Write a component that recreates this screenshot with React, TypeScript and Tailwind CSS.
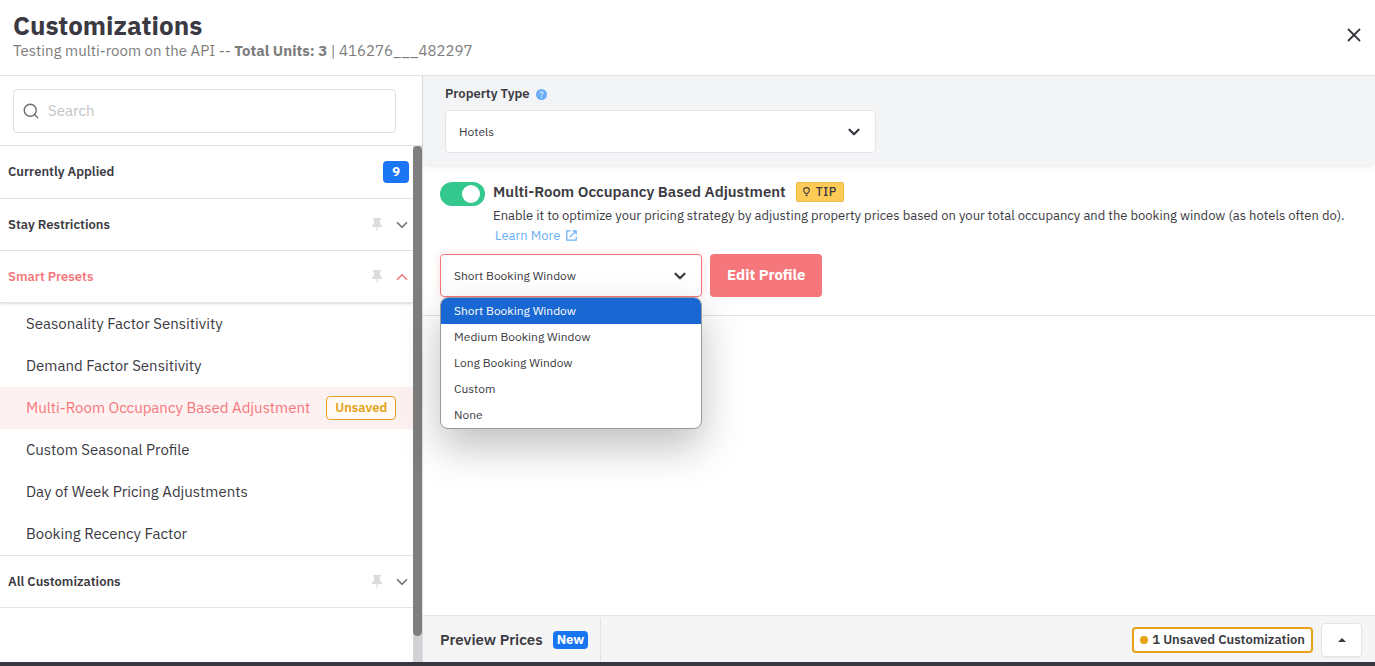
import React, { useState } from 'react';
import { Search, X, ChevronDown, ChevronUp } from 'lucide-react';

interface Section {
  id: string;
  title: string;
  items: string[];
}

const presets = [
  'Seasonality Factor Sensitivity',
  'Demand Factor Sensitivity',
  'Multi-Room Occupancy Based Adjustment',
  'Custom Seasonal Profile',
  'Day of Week Pricing Adjustments',
  'Booking Recency Factor',
];

const sections: Section[] = [
  { id: 'stay', title: 'Stay Restrictions', items: [] },
  { id: 'presets', title: 'Smart Presets', items: presets },
  { id: 'all', title: 'All Customizations', items: [] },
];

const bookingWindows = ['Short Booking Window', 'Medium Booking Window', 'Long Booking Window', 'Custom', 'None'];

const PinIcon = () => (
  <svg width="10" height="13" viewBox="0 0 10 13" fill="#dcdcdc" aria-hidden="true">
    <path d="M1 0h8v1.6H8v4l2 1.8V9H0V7.4l2-1.8v-4H1z" />
    <path d="M4.4 9h1.2v3.2L5 13l-.6-.8z" />
  </svg>
);

const HelpIcon = () => (
  <svg width="11" height="11" viewBox="0 0 12 12" aria-hidden="true">
    <circle cx="6" cy="6" r="6" fill="#6aabf7" />
    <path d="M4.3 4.7a1.7 1.7 0 1 1 2.5 1.5c-.6.3-.8.5-.8 1.1" fill="none" stroke="#fff" strokeWidth="1" />
    <circle cx="6" cy="9" r=".7" fill="#fff" />
  </svg>
);

const BulbIcon = () => (
  <svg width="7" height="10" viewBox="0 0 8 11" fill="none" stroke="#3b3a42" strokeWidth="1.2" aria-hidden="true">
    <path d="M2.8 7.4C2.6 6.2.8 5.4.8 3.7a3.2 3.2 0 0 1 6.4 0C7.2 5.4 5.4 6.2 5.2 7.4z" />
    <path d="M2.8 9.6h2.4" />
  </svg>
);

const ExternalIcon = () => (
  <svg width="11" height="11" viewBox="0 0 11 11" fill="none" stroke="currentColor" strokeWidth="1.2" aria-hidden="true">
    <path d="M4.5.8H.8v9.4h9.4V6.5" />
    <path d="M6.5.8h3.7v3.7M10 1 3.8 7.2" />
  </svg>
);

const SectionHeader = ({ title, open, onClick }: { title: string; open: boolean; onClick: () => void }) => (
  <button
    onClick={onClick}
    aria-expanded={open}
    className={`flex h-[52px] w-full items-center border-b border-[#e4e4e4] pr-0.5 pl-2 text-left text-[13px] font-semibold ${open ? 'text-[#f5777b] shadow-sm' : 'text-[#3b3a42]'}`}
  >
    <span className="flex-1">{title}</span>
    <PinIcon />
    <span className={`ml-[11px] ${open ? 'text-[#f5777b]' : 'text-[#6f6f6f]'}`}>
      {open ? <ChevronUp size={18} strokeWidth={2.2} /> : <ChevronDown size={18} strokeWidth={2.2} />}
    </span>
  </button>
);

const Sidebar = () => {
  const [openId, setOpenId] = useState('presets');
  const [active, setActive] = useState(presets[2]);

  return (
    <aside className="flex min-w-0 flex-col border-r border-[#dcdde0]">
      <div className="border-b border-[#e4e4e4] pt-[13px] pr-[26px] pb-3 pl-[13px]">
        <label className="flex h-11 items-center gap-2 rounded border border-[#e0e0e0] px-2">
          <Search size={18} strokeWidth={1.8} className="text-[#6b6b6b]" />
          <input
            type="text"
            aria-label="Search"
            placeholder="Search"
            className="min-w-0 flex-1 text-[15px] outline-none placeholder:text-[#c4c4c4]"
          />
        </label>
      </div>
      <div className="flex flex-1">
        <nav className="min-w-0 flex-1">
          <div className="flex h-[53px] items-center justify-between border-b border-[#e4e4e4] pr-1 pl-2 text-[13px] font-semibold text-[#3b3a42]">
            <span>Currently Applied</span>
            <span className="flex h-[22px] w-[26px] items-center justify-center rounded bg-[#1976f3] font-bold text-white">9</span>
          </div>
          {sections.map((section) => (
            <div key={section.id}>
              <SectionHeader
                title={section.title}
                open={openId === section.id}
                onClick={() => setOpenId(openId === section.id ? '' : section.id)}
              />
              {openId === section.id && (
                <ul className="border-b border-[#e4e4e4]">
                  {section.items.map((item) => (
                    <li key={item}>
                      <button
                        onClick={() => setActive(item)}
                        className={`flex h-[42px] w-full items-center gap-4 pl-[26px] text-left text-[15px] whitespace-nowrap ${active === item ? 'bg-[#fef1f1] text-[#f5777b]' : 'text-[#3b3a42]'}`}
                      >
                        {item}
                        {item === presets[2] && (
                          <span className="rounded border border-[#e6a117] bg-[#fffaf5] px-2 text-[13px] leading-[22px] font-semibold text-[#e6a117]">
                            Unsaved
                          </span>
                        )}
                      </button>
                    </li>
                  ))}
                </ul>
              )}
            </div>
          ))}
        </nav>
        {/* Scrollbar */}
        <div className="flex w-[9px] shrink-0 flex-col bg-[#d2d2d4]">
          <div className="h-[95%] rounded-full bg-[#7f7e7f]" />
        </div>
      </div>
    </aside>
  );
};

export default function App() {
  const [enabled, setEnabled] = useState(true);
  const [bookingWindow, setBookingWindow] = useState(bookingWindows[0]);
  const [menuOpen, setMenuOpen] = useState(true);

  return (
    <div className="flex min-h-screen flex-col border-b-4 border-[#38373f] bg-white font-['IBM_Plex_Sans',Roboto,sans-serif] text-[#3b3a42]">
      <header className="flex items-start justify-between border-b border-[#e4e4e4] pt-[11px] pr-2.5 pb-3 pl-[13px]">
        <div>
          <h1 className="text-[26px] leading-7 font-bold">Customizations</h1>
          <p className="text-[15px] leading-6 text-[#7d7d7d]">
            Testing multi-room on the API -- <b>Total Units: 3</b> | 416276___482297
          </p>
        </div>
        <button aria-label="Close" className="mt-[13px]">
          <X size={22} strokeWidth={2} />
        </button>
      </header>

      <div className="grid flex-1 grid-cols-[4fr_9fr]">
        <Sidebar />

        <main className="flex min-w-0 flex-col">
          <section className="bg-[#f3f4f6] pt-2 pb-3 pl-[22px] shadow-md shadow-black/5">
            <div className="flex items-center gap-1.5 text-[13px] leading-5 font-semibold">
              <label htmlFor="property-type">Property Type</label>
              <HelpIcon />
            </div>
            <div className="relative mt-1.5 w-[431px] max-w-full">
              <select
                id="property-type"
                className="h-[43px] w-full appearance-none rounded border border-[#e4e4e6] bg-white px-[13px] text-xs"
              >
                <option>Hotels</option>
              </select>
              <ChevronDown size={18} strokeWidth={3} className="pointer-events-none absolute top-[13px] right-[13px]" />
            </div>
          </section>

          <section className="border-b border-[#e4e4e4] px-[17px] pt-[15px] pb-[18px]">
            <div className="flex gap-2">
              <label className="mt-0.5 h-6 w-[45px] shrink-0 cursor-pointer">
                <input
                  type="checkbox"
                  checked={enabled}
                  onChange={(e) => setEnabled(e.target.checked)}
                  aria-label="Multi-Room Occupancy Based Adjustment"
                  className="peer sr-only"
                />
                <span className="flex h-full items-center rounded-full bg-[#c9c9c9] px-[5px] peer-checked:justify-end peer-checked:bg-[#34c88f]">
                  <span className="size-[18px] rounded-full bg-white" />
                </span>
              </label>
              <div>
                <div className="flex items-center gap-2.5">
                  <h2 className="text-[15px] leading-6 font-semibold">Multi-Room Occupancy Based Adjustment</h2>
                  <span className="flex items-center gap-1.5 rounded-xs border border-[#edbb45] bg-[#ffcb57] px-1.5 text-xs leading-[18px] font-medium tracking-wider">
                    <BulbIcon /> TIP
                  </span>
                </div>
                <p className="text-[13px] leading-6">
                  Enable it to optimize your pricing strategy by adjusting property prices based on your total occupancy and the booking window (as hotels often do).
                </p>
                <a href="#" className="flex items-center gap-1.5 pl-0.5 text-[13px] leading-[15px] text-[#6aaef5]">
                  Learn More <ExternalIcon />
                </a>
              </div>
            </div>

            <div className="mt-[11px] flex gap-2">
              <div className="relative w-[262px]">
                <select
                  aria-label="Booking window profile"
                  value={bookingWindow}
                  onChange={(e) => setBookingWindow(e.target.value)}
                  className="block h-[43px] w-full appearance-none rounded border border-[#f5777b] bg-white px-[13px] text-xs shadow-[0_0_8px_rgba(245,119,123,0.25)] outline-none"
                >
                  {bookingWindows.map((name) => (
                    <option key={name}>{name}</option>
                  ))}
                </select>
                <ChevronDown size={18} strokeWidth={3} className="pointer-events-none absolute top-[13px] right-[13px]" />
                {menuOpen && (
                  <ul
                    role="listbox"
                    aria-label="Booking windows"
                    className="absolute top-full right-0 left-0 z-10 overflow-hidden rounded-lg border border-[#9a9a9a] bg-white shadow-[0_18px_40px_rgba(0,0,0,0.25)]"
                  >
                    {bookingWindows.map((name) => (
                      <li
                        key={name}
                        role="option"
                        aria-selected={name === bookingWindow}
                        onClick={() => {
                          setBookingWindow(name);
                          setMenuOpen(false);
                        }}
                        className={`h-[26px] px-[13px] text-xs leading-[26px] ${name === bookingWindow ? 'bg-[#1967d2] text-white' : ''}`}
                      >
                        {name}
                      </li>
                    ))}
                  </ul>
                )}
              </div>
              <button className="h-[43px] rounded bg-[#f5777b] px-[17px] text-[15px] font-bold text-white">Edit Profile</button>
            </div>
          </section>

          <footer className="mt-auto flex h-[47px] items-center border-t border-[#e4e4e4] bg-[#f5f5f5] pt-0.5 pr-[13px]">
            <div className="flex h-full items-center gap-2.5 border-r border-[#e4e4e4] pr-3 pl-[17px]">
              <span className="text-[15px] font-semibold">Preview Prices</span>
              <span className="rounded bg-[#1976f3] px-1 text-[13px] leading-[18px] font-bold text-white">New</span>
            </div>
            <button className="ml-auto flex h-[26px] items-center gap-1 rounded border-2 border-[#e6a117] bg-white px-1.5 text-[13px] font-semibold">
              <span className="size-2 rounded-full bg-[#e6a117]" />
              1 Unsaved Customization
            </button>
            <button
              aria-label="Expand preview"
              className="ml-2 flex h-[34px] w-[41px] items-center justify-center rounded border border-[#e6e6e6] bg-white shadow-xs"
            >
              <svg width="8" height="4" viewBox="0 0 8 4" fill="#3b3a42" aria-hidden="true">
                <path d="M4 0l4 4H0z" />
              </svg>
            </button>
          </footer>
        </main>
      </div>
    </div>
  );
}
